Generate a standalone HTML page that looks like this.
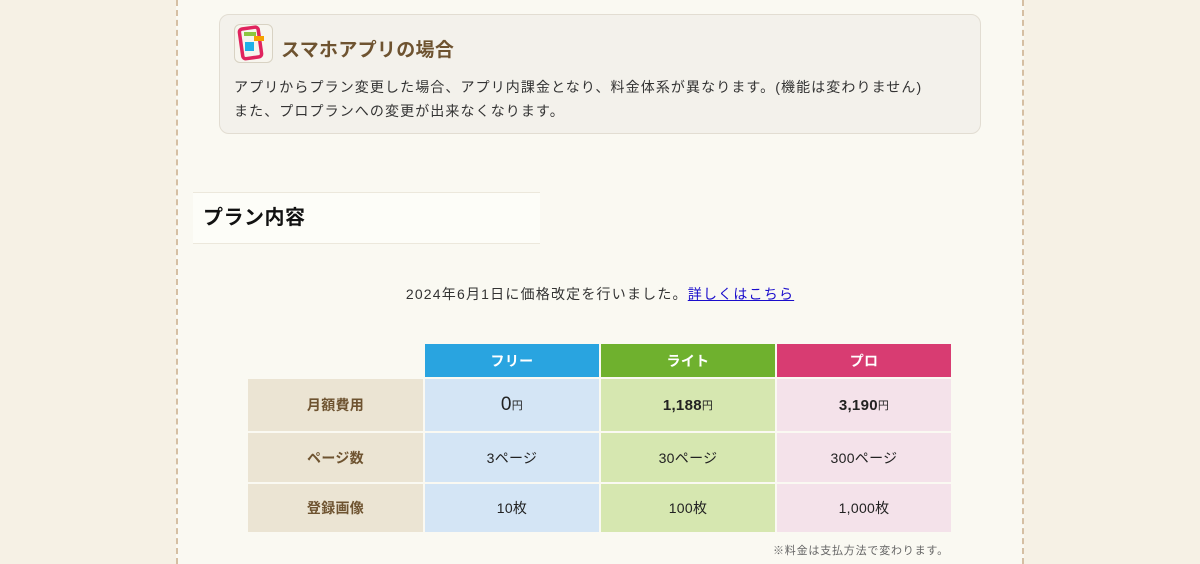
<!DOCTYPE html>
<html><head><meta charset="utf-8"><style>
body{margin:0;width:1200px;height:564px;background:#f6f1e5;font-family:"Liberation Sans","Noto Sans CJK JP",sans-serif;overflow:hidden;position:relative}
.main{position:absolute;left:176px;top:0;width:848px;height:564px;background:#faf9f2;border-left:2px dashed #d5bfa3;border-right:2px dashed #d5bfa3;box-sizing:border-box}
.box{position:absolute;left:219px;top:14px;width:762px;height:120px;box-sizing:border-box;background:#f3f1eb;border:1px solid #e2ddd2;border-radius:10px}
.icon{position:absolute;left:14px;top:9px;width:39px;height:39px;border:1px solid #d8d2c3;border-radius:6px;background:#f7f5ee;box-sizing:border-box}
.box h3{position:absolute;left:61px;top:20px;margin:0;font-size:19px;color:#6e5330;font-weight:bold;letter-spacing:0.3px}
.box p{position:absolute;left:14px;top:60px;margin:0;font-size:14px;line-height:24px;color:#333;letter-spacing:1.1px}
.h2{position:absolute;left:193px;top:192px;width:347px;height:52px;background:#fdfdf8;border-top:1px solid #ece8dc;border-bottom:1px solid #ece8dc;box-sizing:border-box;font-size:20px;font-weight:bold;line-height:50px;padding-left:10px;color:#111;letter-spacing:0.5px}
.note{position:absolute;left:0;width:1200px;top:284px;text-align:center;font-size:14px;color:#333;letter-spacing:1.2px}
.note a{color:#1a0dcc}
.c{position:absolute;display:flex;align-items:center;justify-content:center;font-size:14px;color:#222;letter-spacing:0.3px}
.small{position:absolute;left:773px;top:542px;font-size:11px;color:#666;letter-spacing:0.8px}
</style></head><body>
<div class="main"></div>
<div class="box">
<div class="icon"><svg width="37" height="37" viewBox="0 0 37 37"><rect x="6" y="3" width="19" height="30" rx="3" fill="none" stroke="#e0245e" stroke-width="3.5" transform="rotate(-8 15 18)"/><rect x="9" y="7" width="12" height="4" fill="#8cc63f"/><rect x="19" y="11" width="10" height="5" fill="#f5a100"/><rect x="10" y="17" width="9" height="9" fill="#1fb0e8"/></svg></div>
<h3>スマホアプリの場合</h3>
<p>アプリからプラン変更した場合、アプリ内課金となり、料金体系が異なります。(機能は変わりません)<br>また、プロプランへの変更が出来なくなります。</p>
</div>
<div class="h2">プラン内容</div>
<div class="note">2024年6月1日に価格改定を行いました。<a href="#">詳しくはこちら</a></div>

<div class="c" style="left:425px;top:344px;width:174px;height:33px;background:#29a4e0;color:#fff;font-weight:bold">フリー</div>
<div class="c" style="left:601px;top:344px;width:174px;height:33px;background:#6fb12e;color:#fff;font-weight:bold">ライト</div>
<div class="c" style="left:777px;top:344px;width:174px;height:33px;background:#d83c72;color:#fff;font-weight:bold">プロ</div>

<div class="c" style="left:248px;top:379px;width:175px;height:52px;background:#ebe4d3;color:#6e5330;font-weight:bold">月額費用</div>
<div class="c" style="left:425px;top:379px;width:174px;height:52px;background:#d4e5f5"><span style="font-size:19px">0</span><span style="font-size:11px">円</span></div>
<div class="c" style="left:601px;top:379px;width:174px;height:52px;background:#d6e7b0;font-weight:bold"><span style="font-size:15px">1,188</span><span style="font-size:11px;font-weight:normal">円</span></div>
<div class="c" style="left:777px;top:379px;width:174px;height:52px;background:#f4e2ea;font-weight:bold"><span style="font-size:15px">3,190</span><span style="font-size:11px;font-weight:normal">円</span></div>

<div class="c" style="left:248px;top:433px;width:175px;height:49px;background:#ebe4d3;color:#6e5330;font-weight:bold">ページ数</div>
<div class="c" style="left:425px;top:433px;width:174px;height:49px;background:#d4e5f5">3ページ</div>
<div class="c" style="left:601px;top:433px;width:174px;height:49px;background:#d6e7b0">30ページ</div>
<div class="c" style="left:777px;top:433px;width:174px;height:49px;background:#f4e2ea">300ページ</div>

<div class="c" style="left:248px;top:484px;width:175px;height:48px;background:#ebe4d3;color:#6e5330;font-weight:bold">登録画像</div>
<div class="c" style="left:425px;top:484px;width:174px;height:48px;background:#d4e5f5">10枚</div>
<div class="c" style="left:601px;top:484px;width:174px;height:48px;background:#d6e7b0">100枚</div>
<div class="c" style="left:777px;top:484px;width:174px;height:48px;background:#f4e2ea">1,000枚</div>
<div class="small">※料金は支払方法で変わります。</div>
</body></html>
